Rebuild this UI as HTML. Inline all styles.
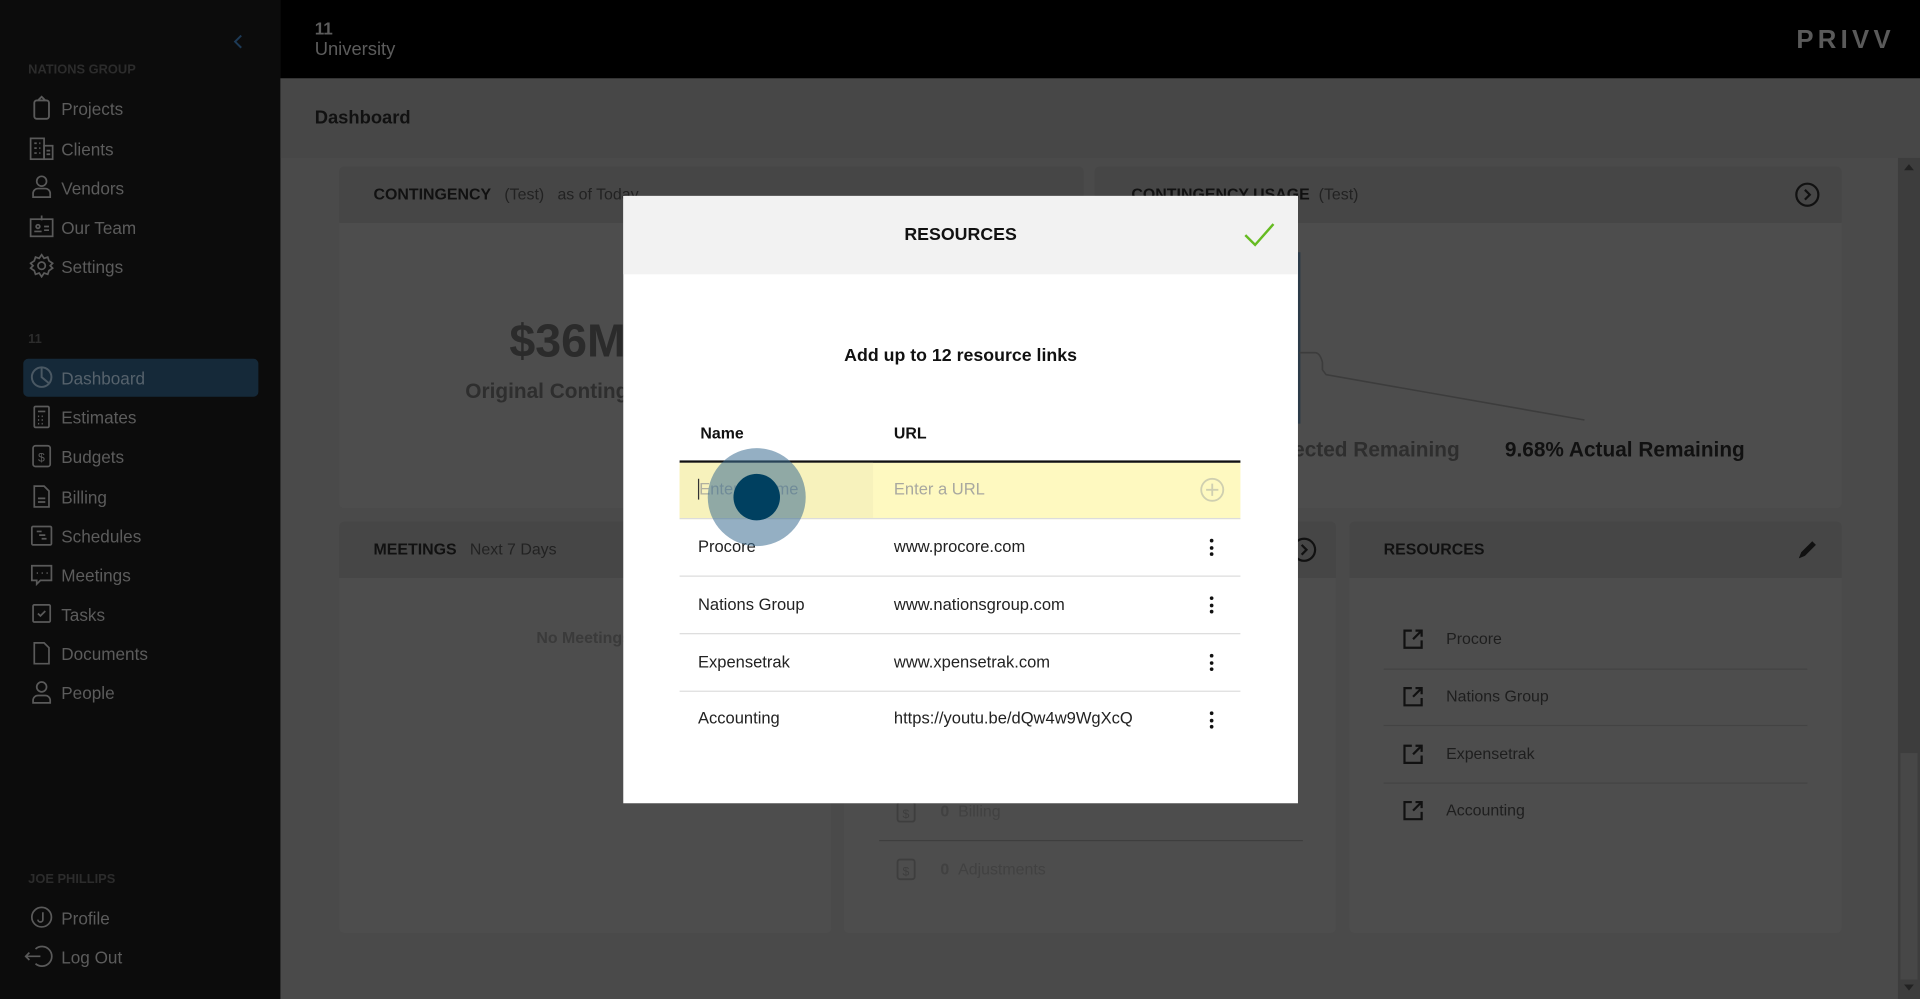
<!DOCTYPE html>
<html><head><meta charset="utf-8">
<style>
html,body{margin:0;padding:0;width:1920px;height:999px;overflow:hidden;background:#4a4a4a;}
#w{position:absolute;left:0;top:0;width:1568px;height:816px;transform:scale(1.22449);transform-origin:0 0;font-family:"Liberation Sans",sans-serif;background:#4a4a4a;overflow:hidden;}
.a{position:absolute;white-space:nowrap;}
.sb{left:0;top:0;width:229px;height:816px;background:#0c0c0c;}
.nav{left:50px;font-size:14px;color:#5c5c5c;line-height:16px;}
.ico{position:absolute;left:24px;width:20px;height:20px;}
.sec{left:23px;font-size:10.5px;color:#2c2c2c;font-weight:bold;}
.card{background:#4d4d4d;border-radius:4px;}
.ch{background:#464646;border-radius:4px 4px 0 0;}
.t13{font-size:13px;color:#111;}
.row{position:absolute;left:555px;width:458px;height:46px;border-bottom:1px solid #dcdcdc;font-size:13.5px;color:#222;}
.row span{position:absolute;top:15px;}
.kb{position:absolute;left:988px;width:4px;}
.kb i{display:block;width:3px;height:3px;border-radius:50%;background:#111;margin-bottom:2.5px;}
</style></head><body><div id="w">
<div class="a sb"></div>
<svg class="a" style="left:190px;top:28px" width="10" height="12"><path d="M7 1L2 6l5 5" stroke="#1d3a56" stroke-width="1.6" fill="none"/></svg>
<div class="a sec" style="top:51px">NATIONS GROUP</div>
<svg class="ico" style="top:78px" viewBox="0 0 20 20" fill="none" stroke="#5a5a5a" stroke-width="1.5"><rect x="4" y="4" width="12" height="15" rx="2"/><path d="M7 4l3-3 3 3"/></svg>
<div class="a nav" style="top:81px">Projects</div>
<svg class="ico" style="top:111px" viewBox="0 0 20 20" fill="none" stroke="#5a5a5a" stroke-width="1.4"><rect x="1" y="2" width="11" height="17"/><rect x="12" y="8" width="7" height="11"/><path d="M4 6h2M8 6h1M4 10h2M8 10h1M4 14h2M8 14h1M14 12h3M14 15h3"/></svg>
<div class="a nav" style="top:114px">Clients</div>
<svg class="ico" style="top:142px" viewBox="0 0 20 20" fill="none" stroke="#5a5a5a" stroke-width="1.4"><circle cx="10" cy="6" r="4"/><path d="M3 19v-3a4 4 0 014-4h6a4 4 0 014 4v3z"/></svg>
<div class="a nav" style="top:146px">Vendors</div>
<svg class="ico" style="top:175px" viewBox="0 0 20 20" fill="none" stroke="#5a5a5a" stroke-width="1.4"><rect x="1" y="4" width="18" height="14"/><path d="M10 1v4M4 14h6M12 10h4M12 13h4"/><circle cx="7" cy="10" r="1.5"/></svg>
<div class="a nav" style="top:178px">Our Team</div>
<svg class="ico" style="top:207px" viewBox="0 0 20 20" fill="none" stroke="#5a5a5a" stroke-width="1.4"><circle cx="10" cy="10" r="3"/><path d="M10 1l2 3 3-1 1 3 3 2-2 2 2 2-3 2-1 3-3-1-2 3-2-3-3 1-1-3-3-2 2-2-2-2 3-2 1-3 3 1z"/></svg>
<div class="a nav" style="top:210px">Settings</div>
<div class="a sec" style="top:271px">11</div>
<div class="a" style="left:19px;top:293px;width:192px;height:31px;background:#152939;border-radius:4px"></div>
<svg class="ico" style="top:298px" viewBox="0 0 20 20" fill="none" stroke="#4a5863" stroke-width="1.6"><circle cx="10" cy="10" r="8"/><path d="M10 2v8l6 5" /></svg>
<div class="a nav" style="top:301px;color:#56626c">Dashboard</div>
<svg class="ico" style="top:330px" viewBox="0 0 20 20" fill="none" stroke="#5a5a5a" stroke-width="1.4"><rect x="4" y="2" width="12" height="17" rx="1"/><path d="M7 6h6M7 10h1M10 10h1M7 13h1M10 13h1M7 16h1M10 16h1"/></svg>
<div class="a nav" style="top:333px">Estimates</div>
<svg class="ico" style="top:362px" viewBox="0 0 20 20" fill="none" stroke="#5a5a5a" stroke-width="1.4"><rect x="3" y="2" width="14" height="17" rx="2"/><text x="7" y="15" font-size="10" fill="#5a5a5a" stroke="none">$</text></svg>
<div class="a nav" style="top:365px">Budgets</div>
<svg class="ico" style="top:395px" viewBox="0 0 20 20" fill="none" stroke="#5a5a5a" stroke-width="1.4"><path d="M4 2h8l4 4v13H4z"/><path d="M7 12h6M7 15h6"/></svg>
<div class="a nav" style="top:398px">Billing</div>
<svg class="ico" style="top:427px" viewBox="0 0 20 20" fill="none" stroke="#5a5a5a" stroke-width="1.4"><rect x="2" y="3" width="16" height="15" rx="1"/><path d="M6 7h4M8 10h5M10 13h4"/></svg>
<div class="a nav" style="top:430px">Schedules</div>
<svg class="ico" style="top:459px" viewBox="0 0 20 20" fill="none" stroke="#5a5a5a" stroke-width="1.4"><path d="M2 3h16v12H9l-3 3v-3H2z"/><path d="M6 9h1M10 9h1M14 9h1"/></svg>
<div class="a nav" style="top:462px">Meetings</div>
<svg class="ico" style="top:491px" viewBox="0 0 20 20" fill="none" stroke="#5a5a5a" stroke-width="1.4"><rect x="3" y="3" width="14" height="14" rx="1"/><path d="M7 10l2 2 4-4"/></svg>
<div class="a nav" style="top:494px">Tasks</div>
<svg class="ico" style="top:523px" viewBox="0 0 20 20" fill="none" stroke="#5a5a5a" stroke-width="1.4"><path d="M4 2h8l4 4v13H4z"/></svg>
<div class="a nav" style="top:526px">Documents</div>
<svg class="ico" style="top:555px" viewBox="0 0 20 20" fill="none" stroke="#5a5a5a" stroke-width="1.4"><circle cx="10" cy="6" r="4"/><path d="M3 19v-2a4 4 0 014-4h6a4 4 0 014 4v2z"/></svg>
<div class="a nav" style="top:558px">People</div>
<div class="a sec" style="top:712px">JOE PHILLIPS</div>
<svg class="ico" style="top:739px" viewBox="0 0 20 20" fill="none" stroke="#5a5a5a" stroke-width="1.4"><circle cx="10" cy="10" r="8"/><path d="M11 6v6a2 2 0 01-4 0"/></svg>
<div class="a nav" style="top:742px">Profile</div>
<svg class="ico" style="top:771px;left:20px;width:24px" viewBox="0 0 24 20" fill="none" stroke="#5a5a5a" stroke-width="1.4"><path d="M9 4a8 8 0 110 12"/><path d="M1 10h12M4 7l-3 3 3 3"/></svg>
<div class="a nav" style="top:774px">Log Out</div>

<div class="a" style="left:229px;top:0;width:1339px;height:64px;background:#000"></div>
<div class="a" style="left:257px;top:15px;font-size:14px;font-weight:bold;color:#5c5c5c">11</div>
<div class="a" style="left:257px;top:32px;font-size:15px;color:#5c5c5c">University</div>
<div class="a" style="left:1467px;top:21px;font-size:21px;font-weight:bold;color:#5a5a5a;letter-spacing:3.5px">PRIVV</div>
<div class="a" style="left:229px;top:64px;width:1339px;height:65px;background:#474747"></div>
<div class="a" style="left:257px;top:88px;font-size:15px;font-weight:bold;color:#111">Dashboard</div>
<div class="a" style="left:1550px;top:129px;width:18px;height:687px;background:#3d3d3d"></div>
<div class="a" style="left:1552px;top:615px;width:14px;height:185px;background:#474747"></div>
<div class="a" style="left:1555px;top:134px;width:0;height:0;border-left:4px solid transparent;border-right:4px solid transparent;border-bottom:5px solid #222"></div>
<div class="a" style="left:1555px;top:804px;width:0;height:0;border-left:4px solid transparent;border-right:4px solid transparent;border-top:5px solid #222"></div>

<div class="a card" style="left:277px;top:136px;width:608px;height:279px"></div>
<div class="a ch" style="left:277px;top:136px;width:608px;height:46px"></div>
<div class="a t13" style="left:305px;top:151px"><b>CONTINGENCY</b>&nbsp;&nbsp;&nbsp;<span style="color:#222">(Test)&nbsp;&nbsp;&nbsp;as of Today</span></div>
<div class="a" style="left:416px;top:258px;font-size:38px;font-weight:bold;color:#2b2b2b">$36M</div>
<div class="a" style="left:380px;top:310px;font-size:17px;font-weight:bold;color:#2e2e2e">Original Contingency</div>
<div class="a card" style="left:894px;top:136px;width:610px;height:279px"></div>
<div class="a ch" style="left:894px;top:136px;width:610px;height:46px"></div>
<div class="a t13" style="left:924px;top:151px"><b>CONTINGENCY USAGE</b>&nbsp;&nbsp;<span style="color:#222">(Test)</span></div>
<svg class="a" style="left:1465px;top:148px" width="22" height="22"><circle cx="11" cy="11" r="9" stroke="#111" stroke-width="1.8" fill="none"/><path d="M9 7l4 4-4 4" stroke="#111" stroke-width="1.8" fill="none"/></svg>
<svg class="a" style="left:1040px;top:200px" width="300" height="160"><path d="M21 6v140" stroke="#2b3a48" stroke-width="2"/><path d="M21 88h13q4 0 6 8l0 6 3 4 211 37" stroke="#3c3c3c" stroke-width="1.3" fill="none"/></svg>
<div class="a" style="left:1023px;top:358px;font-size:17px;font-weight:bold;color:#2e2e2e">Projected Remaining</div>
<div class="a" style="left:1229px;top:358px;font-size:17px;font-weight:bold;color:#111">9.68% Actual Remaining</div>

<div class="a card" style="left:277px;top:426px;width:402px;height:336px"></div>
<div class="a ch" style="left:277px;top:426px;width:402px;height:46px"></div>
<div class="a t13" style="left:305px;top:441px"><b>MEETINGS</b>&nbsp;&nbsp;&nbsp;<span style="color:#222">Next 7 Days</span></div>
<div class="a" style="left:438px;top:513px;font-size:13px;font-weight:bold;color:#3a3a3a">No Meetings</div>
<div class="a card" style="left:689px;top:426px;width:402px;height:336px"></div>
<div class="a ch" style="left:689px;top:426px;width:402px;height:46px"></div>
<svg class="a" style="left:1054px;top:438px" width="22" height="22"><circle cx="11" cy="11" r="9" stroke="#111" stroke-width="1.8" fill="none"/><path d="M9 7l4 4-4 4" stroke="#111" stroke-width="1.8" fill="none"/></svg>
<div class="a" style="left:718px;top:686px;width:346px;height:1px;background:#3e3e3e"></div>
<svg class="a" style="left:731px;top:653px" width="18" height="20"><rect x="2" y="2" width="14" height="16" rx="2" stroke="#3e3e3e" stroke-width="1.5" fill="none"/><text x="6" y="15" font-size="10" fill="#3e3e3e">$</text></svg>
<div class="a" style="left:768px;top:655px;font-size:13px;color:#414141"><b>0</b>&nbsp;&nbsp;Billing</div>
<svg class="a" style="left:731px;top:700px" width="18" height="20"><rect x="2" y="2" width="14" height="16" rx="2" stroke="#3e3e3e" stroke-width="1.5" fill="none"/><text x="6" y="15" font-size="10" fill="#3e3e3e">$</text></svg>
<div class="a" style="left:768px;top:702px;font-size:13px;color:#414141"><b>0</b>&nbsp;&nbsp;Adjustments</div>

<div class="a card" style="left:1102px;top:426px;width:402px;height:336px"></div>
<div class="a ch" style="left:1102px;top:426px;width:402px;height:46px"></div>
<div class="a t13" style="left:1130px;top:441px"><b>RESOURCES</b></div>
<svg class="a" style="left:1466px;top:439px" width="20" height="20"><path d="M3 17l2-5 9-9 3 3-9 9z" fill="#111"/></svg>
<div class="a" style="left:1130px;top:546px;width:346px;height:1px;background:#434343"></div>
<div class="a" style="left:1130px;top:592px;width:346px;height:1px;background:#434343"></div>
<div class="a" style="left:1130px;top:639px;width:346px;height:1px;background:#434343"></div>
<svg class="a" style="left:1145px;top:513px" width="18" height="18"><path d="M8 2H2v14h14v-6M15 3l-6 6M11 2h5v5" stroke="#111" stroke-width="1.8" fill="none"/></svg>
<div class="a" style="left:1181px;top:514px;font-size:13px;color:#1e1e1e">Procore</div>
<svg class="a" style="left:1145px;top:560px" width="18" height="18"><path d="M8 2H2v14h14v-6M15 3l-6 6M11 2h5v5" stroke="#111" stroke-width="1.8" fill="none"/></svg>
<div class="a" style="left:1181px;top:561px;font-size:13px;color:#1e1e1e">Nations Group</div>
<svg class="a" style="left:1145px;top:607px" width="18" height="18"><path d="M8 2H2v14h14v-6M15 3l-6 6M11 2h5v5" stroke="#111" stroke-width="1.8" fill="none"/></svg>
<div class="a" style="left:1181px;top:608px;font-size:13px;color:#1e1e1e">Expensetrak</div>
<svg class="a" style="left:1145px;top:653px" width="18" height="18"><path d="M8 2H2v14h14v-6M15 3l-6 6M11 2h5v5" stroke="#111" stroke-width="1.8" fill="none"/></svg>
<div class="a" style="left:1181px;top:654px;font-size:13px;color:#1e1e1e">Accounting</div>

<div class="a" style="left:509px;top:160px;width:551px;height:496px;background:#fff"></div>
<div class="a" style="left:509px;top:160px;width:551px;height:64px;background:#f2f2f2"></div>
<div class="a" style="left:509px;top:184px;width:551px;text-align:center;font-size:14.5px;font-weight:bold;color:#111">RESOURCES</div>
<svg class="a" style="left:1014px;top:180px" width="28" height="24"><path d="M3 12l8 8L26 3" stroke="#66bb22" stroke-width="2" fill="none"/></svg>
<div class="a" style="left:509px;top:283px;width:551px;text-align:center;font-size:14.5px;font-weight:bold;color:#111">Add up to 12 resource links</div>
<div class="a" style="left:572px;top:346px;font-size:13px;font-weight:bold;color:#111">Name</div>
<div class="a" style="left:730px;top:346px;font-size:13px;font-weight:bold;color:#111">URL</div>
<div class="a" style="left:555px;top:376px;width:458px;height:1.5px;background:#111"></div>
<div class="a" style="left:555px;top:378px;width:458px;height:45px;background:#fef9c0;border-bottom:1px solid #dcdcdc"></div>
<div class="a" style="left:555px;top:378px;width:158px;height:45px;background:#f7f2bc"></div>
<div class="a" style="left:570px;top:391px;width:1px;height:17px;background:#333"></div>
<div class="a" style="left:571px;top:392px;font-size:13.5px;color:#b0b0a0">Enter a name</div>
<div class="a" style="left:730px;top:392px;font-size:13.5px;color:#a8a8a0">Enter a URL</div>
<svg class="a" style="left:979px;top:389px" width="22" height="22"><circle cx="11" cy="11" r="9" stroke="#cfcfb0" stroke-width="1.5" fill="none"/><path d="M11 6v10M6 11h10" stroke="#cfcfb0" stroke-width="1.5"/></svg>
<div class="row" style="top:424px"><span style="left:15px">Procore</span><span style="left:175px">www.procore.com</span></div>
<div class="row" style="top:471px"><span style="left:15px">Nations Group</span><span style="left:175px">www.nationsgroup.com</span></div>
<div class="row" style="top:518px"><span style="left:15px">Expensetrak</span><span style="left:175px">www.xpensetrak.com</span></div>
<div class="row" style="top:564px;border-bottom:none"><span style="left:15px">Accounting</span><span style="left:175px">https://youtu.be/dQw4w9WgXcQ</span></div>
<div class="kb" style="top:440px"><i></i><i></i><i></i></div>
<div class="kb" style="top:487px"><i></i><i></i><i></i></div>
<div class="kb" style="top:534px"><i></i><i></i><i></i></div>
<div class="kb" style="top:581px"><i></i><i></i><i></i></div>
<div class="a" style="left:578px;top:366px;width:80px;height:80px;border-radius:50%;background:rgba(60,110,145,0.55)"></div>
<div class="a" style="left:599px;top:387px;width:38px;height:38px;border-radius:50%;background:#004060"></div>
</div></body></html>
